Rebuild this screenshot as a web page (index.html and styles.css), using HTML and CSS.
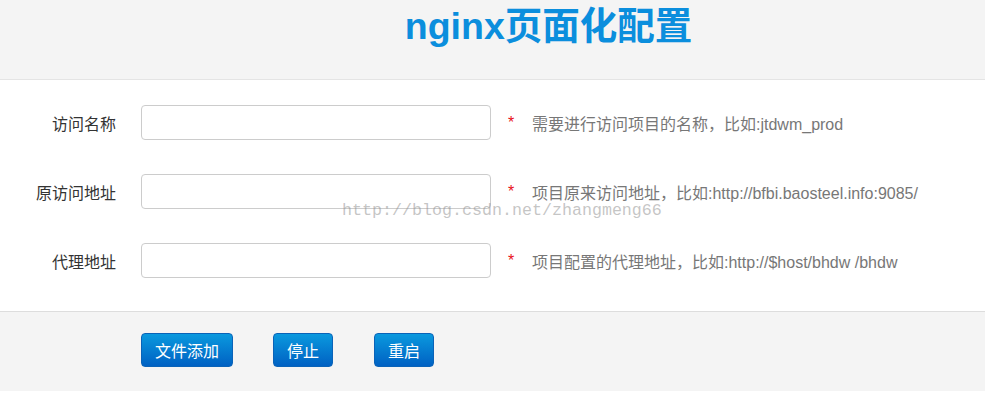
FILE: index.html
```html
<!DOCTYPE html>
<html>
<head>
  <meta charset="utf-8">
  <title>nginx页面化配置</title>
  <link rel="stylesheet" href="styles.css">
</head>
<body>
  <div class="page-head">
    <h1>nginx页面化配置</h1>
  </div>

  <div class="form-body">
    <div class="watermark">http://blog.csdn.net/zhangmeng66</div>
    <div class="form-row">
      <label class="form-label">访问名称</label>
      <input type="text" class="form-input">
      <span class="star">*</span>
      <span class="help">需要进行访问项目的名称，比如:jtdwm_prod</span>
    </div>
    <div class="form-row">
      <label class="form-label">原访问地址</label>
      <input type="text" class="form-input">
      <span class="star">*</span>
      <span class="help">项目原来访问地址，比如:http://bfbi.baosteel.info:9085/</span>
    </div>
    <div class="form-row">
      <label class="form-label">代理地址</label>
      <input type="text" class="form-input">
      <span class="star">*</span>
      <span class="help">项目配置的代理地址，比如:http://$host/bhdw /bhdw</span>
    </div>
  </div>

  <div class="form-foot">
    <button class="btn btn-add">文件添加</button>
    <button class="btn btn-stop">停止</button>
    <button class="btn btn-restart">重启</button>
  </div>
</body>
</html>
```

FILE: styles.css
```css
body {
  margin: 0;
  background: #fff;
  font-family: "Liberation Sans", "Noto Sans CJK SC", sans-serif;
  font-size: 16px;
}
.page-head {
  height: 79px;
  background: #f4f4f4;
  border-bottom: 1px solid #e4e4e4;
}
h1 {
  margin: 0;
  padding-left: 112px;
  text-align: center;
  font-size: 37.5px;
  line-height: 53px;
  font-weight: bold;
  color: #0b8edd;
}
.form-body {
  position: relative;
  padding: 25px 0 33px;
}
.form-row {
  display: flex;
  align-items: center;
  height: 35px;
  margin-bottom: 34px;
}
.form-row:last-child {
  margin-bottom: 0;
}
.form-label {
  width: 116px;
  margin-right: 25px;
  text-align: right;
  color: #333;
}
.form-input {
  box-sizing: border-box;
  width: 350px;
  height: 35px;
  margin: 0;
  border: 1px solid #ccc;
  border-radius: 4px;
  background: #fff;
}
.star {
  width: 24px;
  margin-left: 17px;
  color: #e8101a;
}
.help {
  color: #777;
}
.watermark {
  position: absolute;
  left: 342px;
  top: 121px;
  font-family: "Liberation Mono", monospace;
  font-size: 16.67px;
  color: rgba(140, 140, 140, 0.5);
  pointer-events: none;
}
.form-foot {
  height: 79px;
  background: #f4f4f4;
  border-top: 1px solid #ddd;
  padding-left: 141px;
  display: flex;
  align-items: flex-start;
}
.btn {
  margin-top: 21px;
  height: 34px;
  padding: 0 13px;
  border: 1px solid #0a63b8;
  border-radius: 4px;
  background: linear-gradient(#0a99de, #0061c3);
  color: #fff;
  font-family: "Liberation Sans", "Noto Sans CJK SC", sans-serif;
  font-size: 16px;
  cursor: pointer;
}
.btn-stop {
  margin-left: 40px;
}
.btn-restart {
  margin-left: 41px;
}
```
